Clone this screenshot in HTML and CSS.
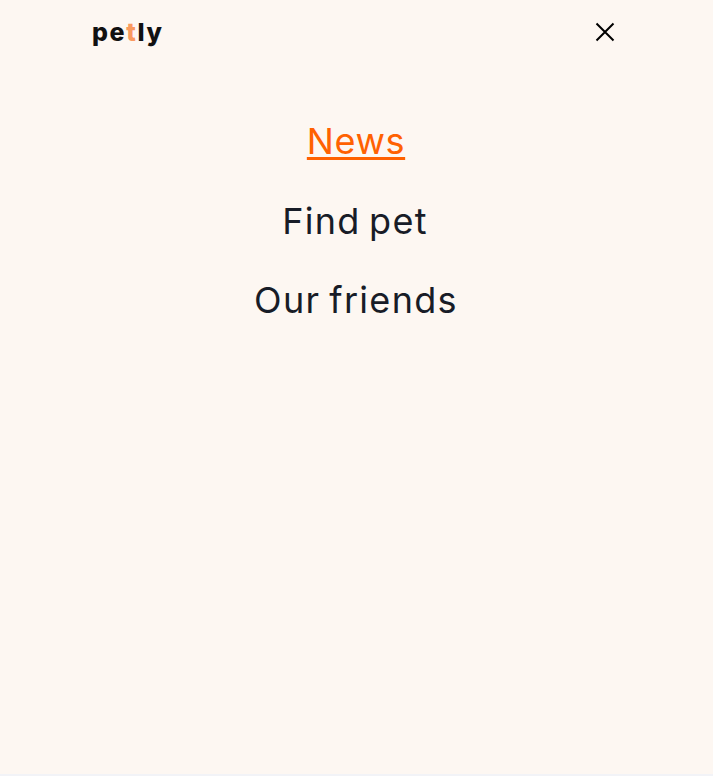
FILE: index.html
```html
<!DOCTYPE html>
<html lang="en">
<head>
<meta charset="utf-8">
<title>petly</title>
<link rel="stylesheet" href="styles.css">
</head>
<body>
<div class="menu">
  <header class="header">
    <a class="logo">pe<span class="logo-accent">t</span>ly</a>
    <button class="close" aria-label="Close menu">
      <svg width="20" height="20" viewBox="0 0 20 20"><path d="M1.5 1.5 18.5 18.5M18.5 1.5 1.5 18.5" fill="none" stroke="#000" stroke-width="2"/></svg>
    </button>
  </header>
  <nav class="nav">
    <a class="link link-news">News</a>
    <a class="link link-find">Find pet</a>
    <a class="link link-friends">Our friends</a>
  </nav>
</div>
</body>
</html>
```
FILE: styles.css
```css
body { margin: 0; background: #f2f3f7; }
.menu { height: 774px; background: #fdf7f2; }
.header { display: flex; justify-content: space-between; align-items: center; height: 64px; padding: 0 98px 0 92px; }
.logo { font: 800 25px/38px "Inter", sans-serif; letter-spacing: 1.6px; color: #111; }
.logo-accent { color: #fa9a5f; }
.close { display: flex; padding: 0; border: 0; background: none; }
.nav { display: flex; flex-direction: column; align-items: center; gap: 24.5px; padding: 50px 1px 0 0; }
.link { font: 400 36px/55px "Inter", sans-serif; letter-spacing: 1.3px; word-spacing: -2.5px; color: #181c27; }
.link-news { letter-spacing: 0.6px; color: #ff6101; text-decoration: underline; text-decoration-thickness: 3px; text-underline-offset: 3px; }
.link-find { padding-right: 2px; letter-spacing: 1.3px; word-spacing: -3px; }
```
